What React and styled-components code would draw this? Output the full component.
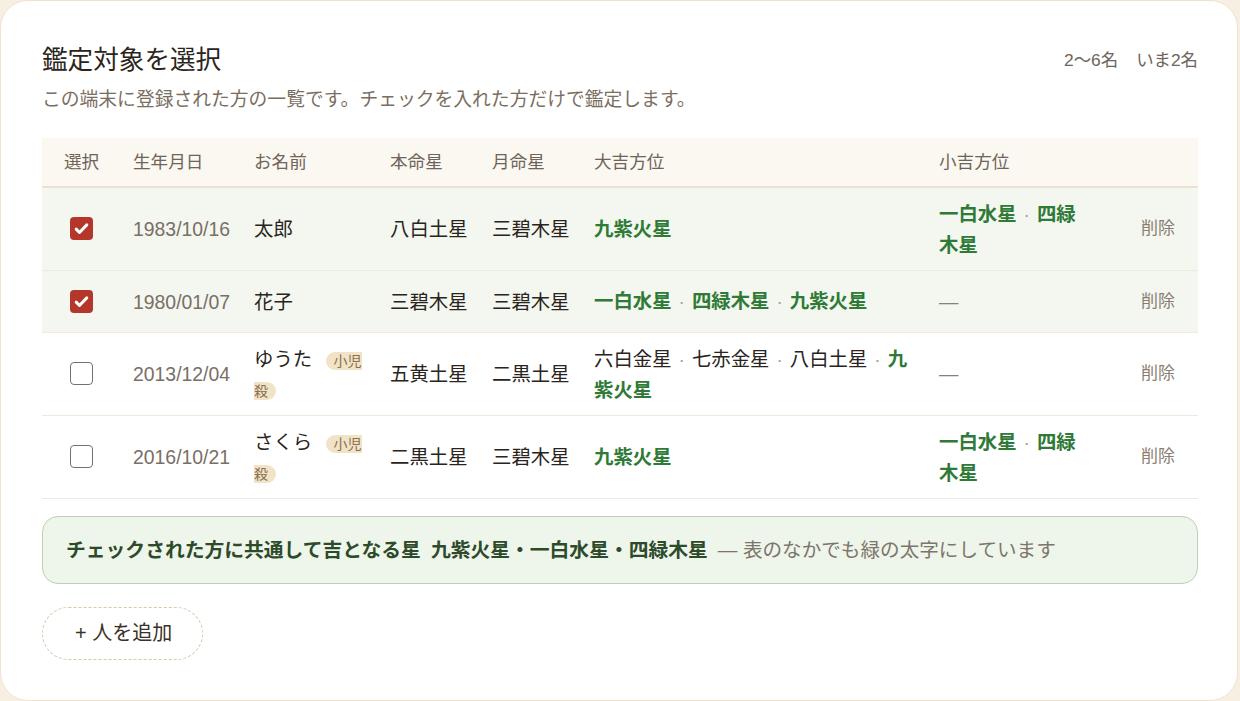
import React from 'react';
import styled, { createGlobalStyle } from 'styled-components';

const GlobalStyle = createGlobalStyle`
  html, body {
    margin: 0;
    padding: 0;
    background: #f7efe2;
  }
  body {
    font-family: "Liberation Sans", "Noto Sans CJK JP", sans-serif;
    color: #2b2520;
  }
  * { box-sizing: border-box; }
`;

const Card = styled.section`
  width: 1238px;
  min-height: 699px;
  background: #fff;
  border: 1px solid #efe3d0;
  border-radius: 28px;
  padding: 42px 39px 40px 41px;
`;

const Head = styled.div`
  display: flex;
  justify-content: space-between;
  align-items: flex-start;
`;

const Title = styled.h1`
  margin: 0;
  font-size: 25.6px;
  line-height: 34px;
  font-weight: 400;
  color: #2b2520;
`;

const Count = styled.div`
  display: flex;
  gap: 18px;
  font-size: 17.4px;
  line-height: 34px;
  color: #6f655b;
`;

const Lead = styled.p`
  margin: 9px 0 0;
  font-size: 18.8px;
  line-height: 28px;
  color: #7a6e62;
`;

const Table = styled.table`
  width: 100%;
  margin-top: 24px;
  border-collapse: collapse;
  table-layout: fixed;
`;

const Th = styled.th`
  text-align: left;
  font-weight: 400;
  font-size: 17.6px;
  line-height: 26px;
  color: #6f6459;
  background: #fbf8f1;
  padding: 11px 12px;
  border-bottom: 2px solid #ebe1d1;
  &:first-child { padding-left: 22px; }
`;

const Tr = styled.tr`
  background: ${p => (p.$on ? '#f3f7ef' : '#fff')};
  border-bottom: 1px solid #efe9de;
`;

const Td = styled.td`
  padding: 10.5px 12px;
  font-size: 19.4px;
  line-height: 30px;
  vertical-align: middle;
  color: ${p => (p.$muted ? '#7a6f66' : '#2a2420')};
  &:first-child { padding-left: 28px; }
  &:last-child { text-align: right; padding-right: 16px; }
`;

const Box = styled.span`
  display: inline-flex;
  align-items: center;
  justify-content: center;
  width: 23px;
  height: 23px;
  border-radius: 4px;
  vertical-align: middle;
  margin-top: -4px;
  background: ${p => (p.$on ? '#b5372b' : '#fff')};
  border: ${p => (p.$on ? 'none' : '1.5px solid #77706b')};
`;

const Badge = styled.span`
  margin-left: 8px;
  padding: 1px 8px;
  border-radius: 10px;
  background: #f1e3c8;
  color: #8b6f4b;
  font-size: 14px;
  line-height: 20px;
`;

const Star = styled.span`
  color: ${p => (p.$good ? '#2e7a36' : '#2a2420')};
  font-weight: ${p => (p.$good ? 700 : 400)};
`;

const Dot = styled.span`
  color: #aaa095;
  font-size: 19px;
  margin: 0 7px;
`;

const Dash = styled.span`
  color: #8a8079;
`;

const DeleteButton = styled.button`
  font: inherit;
  font-size: 17px;
  line-height: 22px;
  padding: 8px 6px;
  border: 1px solid transparent;
  background: none;
  color: #8a7e72;
  cursor: pointer;
`;

const Summary = styled.div`
  margin-top: 17px;
  padding: 20px 23px;
  border: 1px solid #bcd2b8;
  border-radius: 16px;
  background: #eef5ea;
  font-size: 19.8px;
  line-height: 26px;
  color: #2d4a2a;
`;

const Strong = styled.b`
  font-weight: 700;
  margin-right: ${p => p.$gap || 0}px;
`;

const Note = styled.span`
  color: #7d756c;
  font-size: 19.6px;
`;

const AddButton = styled.button`
  margin-top: 23px;
  font: inherit;
  font-size: 20px;
  line-height: 29px;
  padding: 11px 30px 11px 32px;
  border: 1.5px dashed #d9c8aa;
  border-radius: 28px;
  background: #fff;
  color: #3a322a;
  cursor: pointer;
`;

const rows = [
  {
    on: true, date: '1983/10/16', name: '太郎', honmei: '八白土星', getsu: '三碧木星',
    dai: [['九紫火星', 1]], sho: [['一白水星', 1], ['四緑木星', 1]],
  },
  {
    on: true, date: '1980/01/07', name: '花子', honmei: '三碧木星', getsu: '三碧木星',
    dai: [['一白水星', 1], ['四緑木星', 1], ['九紫火星', 1]], sho: [],
  },
  {
    on: false, date: '2013/12/04', name: 'ゆうた', badge: '小児殺', honmei: '五黄土星', getsu: '二黒土星',
    dai: [['六白金星', 0], ['七赤金星', 0], ['八白土星', 0], ['九紫火星', 1]], sho: [],
  },
  {
    on: false, date: '2016/10/21', name: 'さくら', badge: '小児殺', honmei: '二黒土星', getsu: '三碧木星',
    dai: [['九紫火星', 1]], sho: [['一白水星', 1], ['四緑木星', 1]],
  },
];

const Stars = ({ list }) => {
  if (!list.length) return <Dash>—</Dash>;
  return list.map(([t, g], i) => (
    <React.Fragment key={t}>
      {i > 0 && <Dot>·</Dot>}
      <Star $good={!!g}>{t}</Star>
    </React.Fragment>
  ));
};

const Check = ({ on }) => (
  <Box $on={on}>
    {on && (
      <svg width="17" height="17" viewBox="0 0 16 16">
        <path d="M3 8.6l3.1 3.1L13 4.6" fill="none" stroke="#fff" strokeWidth="2.8" strokeLinecap="round" strokeLinejoin="round" />
      </svg>
    )}
  </Box>
);

export default function App() {
  return (
    <>
      <GlobalStyle />
      <Card>
        <Head>
          <Title>鑑定対象を選択</Title>
          <Count>
            <span>2〜6名</span>
            <span>いま2名</span>
          </Count>
        </Head>
        <Lead>この端末に登録された方の一覧です。チェックを入れた方だけで鑑定します。</Lead>

        <Table>
          <colgroup>
            <col style={{ width: 79 }} />
            <col style={{ width: 121 }} />
            <col style={{ width: 136 }} />
            <col style={{ width: 102 }} />
            <col style={{ width: 102 }} />
            <col style={{ width: 345 }} />
            <col style={{ width: 170 }} />
            <col />
          </colgroup>
          <thead>
            <tr>
              <Th>選択</Th>
              <Th>生年月日</Th>
              <Th>お名前</Th>
              <Th>本命星</Th>
              <Th>月命星</Th>
              <Th>大吉方位</Th>
              <Th>小吉方位</Th>
              <Th />
            </tr>
          </thead>
          <tbody>
            {rows.map(r => (
              <Tr key={r.date} $on={r.on}>
                <Td><Check on={r.on} /></Td>
                <Td $muted>{r.date}</Td>
                <Td>
                  {r.name}
                  {r.badge && <> <Badge>{r.badge}</Badge></>}
                </Td>
                <Td>{r.honmei}</Td>
                <Td>{r.getsu}</Td>
                <Td><Stars list={r.dai} /></Td>
                <Td><Stars list={r.sho} /></Td>
                <Td><DeleteButton>削除</DeleteButton></Td>
              </Tr>
            ))}
          </tbody>
        </Table>

        <Summary>
          <Strong $gap={10}>チェックされた方に共通して吉となる星</Strong>
          <Strong $gap={10}>九紫火星・一白水星・四緑木星</Strong>
          <Note>— 表のなかでも緑の太字にしています</Note>
        </Summary>

        <AddButton>+ 人を追加</AddButton>
      </Card>
    </>
  );
}
